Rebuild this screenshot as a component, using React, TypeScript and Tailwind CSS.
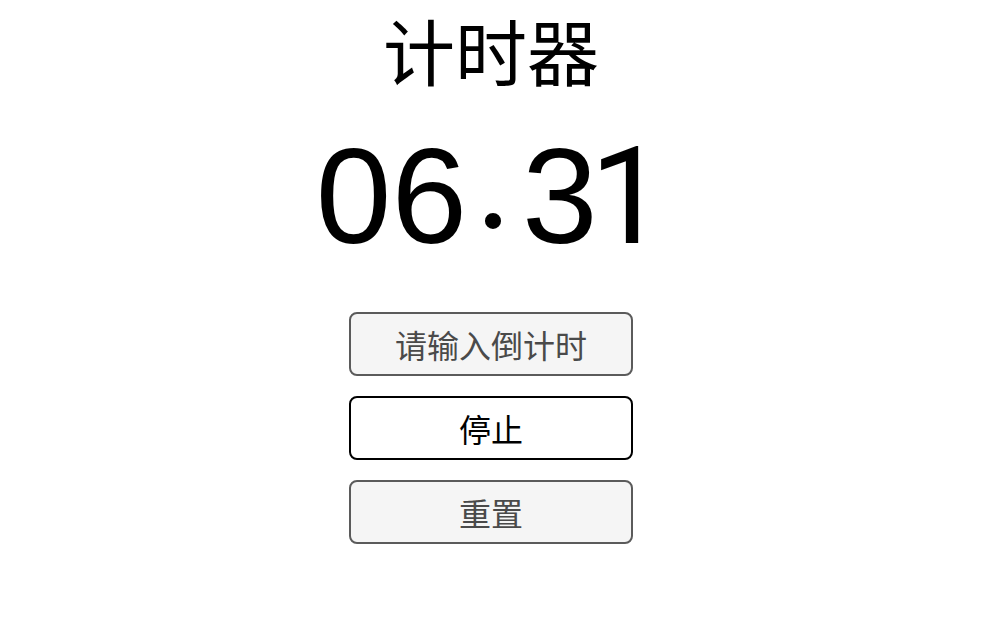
import React from 'react'

const buttons = [
  { label: '请输入倒计时', disabled: true },
  { label: '停止', disabled: false },
  { label: '重置', disabled: true },
]

export default function App() {
  return (
    <div className="min-h-screen bg-white flex flex-col items-center pt-[13px] font-['Noto_Sans_CJK_SC',sans-serif]">
      <h1 className="text-[72px] leading-none text-black font-normal">计时器</h1>

      {/* countdown display */}
      <div className="mt-[43px] text-[136px] leading-none text-black whitespace-nowrap font-['Liberation_Sans',Arial,sans-serif]">
        06
        <span className="relative -top-[16px] inline-block ml-[9px] mr-[12px] font-['Liberation_Serif',serif]">.</span>
        3
        <span className="-ml-[8px] font-['Roboto',sans-serif]">1</span>
      </div>

      <div className="mt-[47px] flex flex-col gap-5">
        {buttons.map((b) => (
          <button
            key={b.label}
            disabled={b.disabled}
            className={
              b.disabled
                ? 'w-[284px] h-[64px] rounded-lg border-2 border-[#5b5b5b] bg-[#f5f5f5] text-[32px] leading-none text-[#4a4a4a]'
                : 'w-[284px] h-[64px] rounded-lg border-2 border-black bg-white text-[32px] leading-none text-black'
            }
          >
            {b.label}
          </button>
        ))}
      </div>
    </div>
  )
}
